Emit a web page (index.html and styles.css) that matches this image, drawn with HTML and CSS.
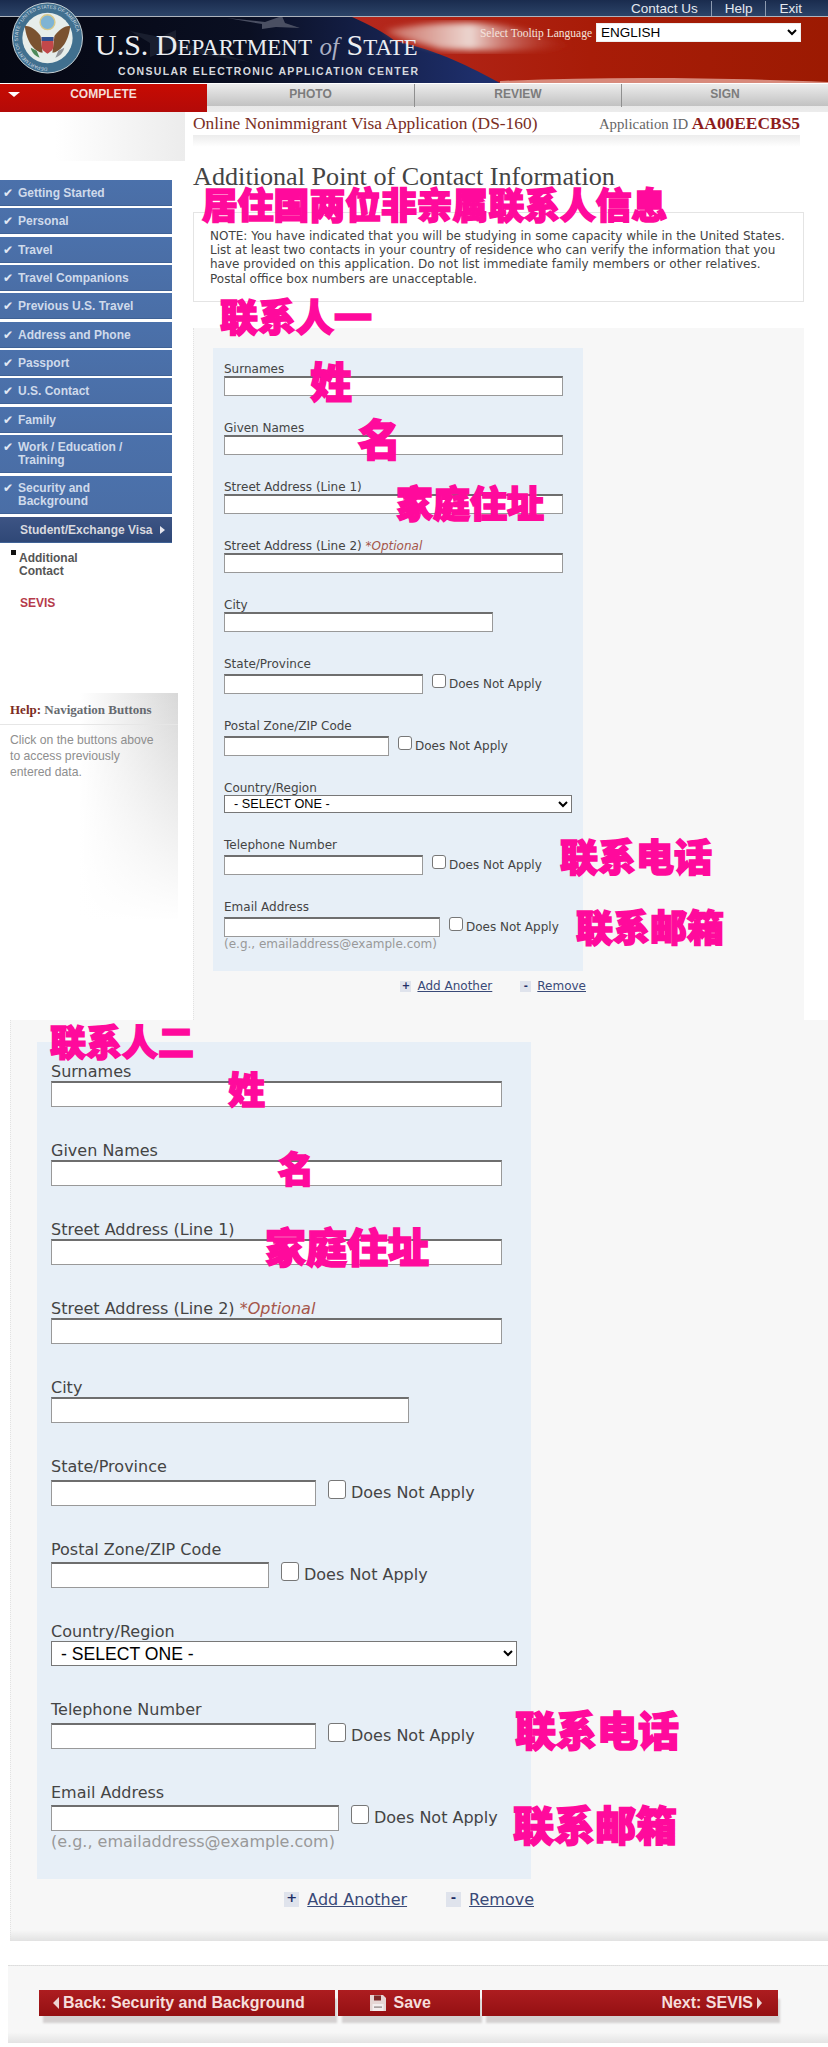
FILE: index.html
```html
<!DOCTYPE html>
<html lang="en">
	<head>
		<meta charset="UTF-8" />
		<meta name="viewport" content="width=device-width, initial-scale=1.0" />
		<title>Online Nonimmigrant Visa Application (DS-160)</title>
		<link rel="stylesheet" href="styles.css">
	</head>
	<body>
		<div class="topbar">
			<a href="#">Contact Us</a>
			<a href="#">Help</a>
			<a href="#">Exit</a>
		</div>

		<header class="banner">
			<svg class="flag" viewBox="0 0 828 66" preserveAspectRatio="none" aria-hidden="true">
				<defs>
					<linearGradient id="red" x1="0" y1="0" x2="1" y2="0">
						<stop offset="0" stop-color="#b5281e" />
						<stop offset="0.5" stop-color="#a81c08" />
						<stop offset="1" stop-color="#9c1a02" />
					</linearGradient>
					<linearGradient id="streak" x1="0" y1="0" x2="1" y2="0">
						<stop offset="0" stop-color="#c9685c" />
						<stop offset="0.45" stop-color="#ecd6d0" />
						<stop offset="1" stop-color="#b5281e" stop-opacity="0" />
					</linearGradient>
					<linearGradient id="navy" x1="0" y1="0" x2="1" y2="0">
						<stop offset="0" stop-color="#050712" />
						<stop offset="0.3" stop-color="#0a0f22" />
						<stop offset="0.58" stop-color="#1e2f6c" />
						<stop offset="1" stop-color="#1e2f6c" />
					</linearGradient>
					<filter id="soft"><feGaussianBlur stdDeviation="3" /></filter>
				</defs>
				<rect width="828" height="66" fill="url(#navy)" />
				<path d="M352 0 H828 V66 H500 C470 50 440 34 395 24 C385 16 370 8 352 0 Z" fill="url(#red)" />
				<path d="M385 14 C430 4 480 3 520 12 C545 18 560 24 575 30 C520 35 470 34 440 32 C420 26 400 22 385 14 Z" fill="url(#streak)" filter="url(#soft)" />
				<path d="M500 64 C600 60 700 60 828 65 V66 H500 Z" fill="#d88a7c" />
				<path d="M227 1 L265 5 L282 -1 L285 6 L300 11 L276 10 L262 12 L262 7 Z" fill="#4a4f62" />
				<path d="M130 14 L160 20 L176 13 L176 24 L250 45 L170 32 L150 40 L150 26 Z" fill="#191e2e" />
			</svg>
			<svg class="seal" viewBox="0 0 72 72" aria-hidden="true">
				<circle cx="36" cy="36" r="35.5" fill="#41708f" stroke="#c8d2d6" stroke-width="1" />
				<circle cx="36" cy="36" r="25.5" fill="#e6edea" />
				<path id="ring" d="M36 66 A30 30 0 1 1 36.1 66" fill="none" />
				<text class="seal-text"><textPath href="#ring">DEPARTMENT OF STATE * UNITED STATES OF AMERICA</textPath></text>
				<circle cx="36" cy="20" r="7.5" fill="#7fb4d4" stroke="#d8c98a" stroke-width="1.5" />
				<path d="M13 24 C18 23 25 28 29 34 L31 51 C24 50 15 42 13 24 Z" fill="#7a5230" />
				<path d="M59 24 C54 23 47 28 43 34 L41 51 C48 50 57 42 59 24 Z" fill="#7a5230" />
				<path d="M30 35 H42 V44 C42 49 38 50 36 52 C34 50 30 49 30 44 Z" fill="#c2484a" />
				<path d="M30 35 H42 V39 H30 Z" fill="#2e4f8f" />
				<path d="M19 46 C20 51 24 55 28 56 L25 49 Z" fill="#4d8a5a" />
				<path d="M53 46 C52 51 48 55 44 56 L47 49 Z" fill="#8f9397" />
			</svg>
			<div class="wordmark">
				<div class="dept">U.S. D<span class="caps">EPARTMENT</span> <em>of</em> S<span class="caps">TATE</span></div>
				<div class="center">CONSULAR ELECTRONIC APPLICATION CENTER</div>
			</div>
			<div class="tooltip-lang">
				<label for="lang">Select Tooltip Language</label>
				<select id="lang"><option>ENGLISH</option></select>
			</div>
		</header>

		<nav class="tabs">
			<div class="tab active"><span class="tab-arrow"></span>COMPLETE</div>
			<div class="tab">PHOTO</div>
			<div class="tab">REVIEW</div>
			<div class="tab">SIGN</div>
		</nav>

		<div class="content">
			<aside class="sidebar">
				<div class="side-fade"></div>
				<ul class="side-nav">
					<li><span class="check">✔</span>Getting Started</li>
					<li><span class="check">✔</span>Personal</li>
					<li><span class="check">✔</span>Travel</li>
					<li><span class="check">✔</span>Travel Companions</li>
					<li><span class="check">✔</span>Previous U.S. Travel</li>
					<li><span class="check">✔</span>Address and Phone</li>
					<li><span class="check">✔</span>Passport</li>
					<li><span class="check">✔</span>U.S. Contact</li>
					<li><span class="check">✔</span>Family</li>
					<li class="tall"><span class="check">✔</span>Work / Education /<br />Training</li>
					<li class="tall"><span class="check">✔</span>Security and<br />Background</li>
					<li class="current">Student/Exchange Visa<span class="side-arrow"></span></li>
				</ul>
				<div class="sub-item">Additional<br />Contact</div>
				<div class="sub-next">SEVIS</div>
				<div class="help">
					<h4><span>Help:</span> Navigation Buttons</h4>
					<p>Click on the buttons above to access previously entered data.</p>
				</div>
			</aside>

			<main class="main">
				<div class="app-row">
					<span class="app-title">Online Nonimmigrant Visa Application (DS-160)</span>
					<span class="app-id">Application ID <b>AA00EECBS5</b></span>
				</div>
				<div class="app-shadow"></div>
				<h1 class="page-title">Additional Point of Contact Information</h1>
				<div class="note">
					NOTE: You have indicated that you will be studying in some capacity while in the United States.
					List at least two contacts in your country of residence who can verify the information that you
					have provided on this application. Do not list immediate family members or other relatives.
					Postal office box numbers are unacceptable.
				</div>

				<section class="panel">
					<form class="contact">
						<div class="field"><label>Surnames</label><input class="w-full" type="text" /></div>
						<div class="field"><label>Given Names</label><input class="w-full" type="text" /></div>
						<div class="field"><label>Street Address (Line 1)</label><input class="w-full" type="text" /></div>
						<div class="field"><label>Street Address (Line 2) <i>*Optional</i></label><input class="w-full" type="text" /></div>
						<div class="field"><label>City</label><input class="w-city" type="text" /></div>
						<div class="field"><label>State/Province</label>
							<div class="row"><input class="w-state" type="text" /><input type="checkbox" /><span>Does Not Apply</span></div></div>
						<div class="field"><label>Postal Zone/ZIP Code</label>
							<div class="row"><input class="w-zip" type="text" /><input type="checkbox" /><span>Does Not Apply</span></div></div>
						<div class="field select-field"><label>Country/Region</label>
							<select><option>- SELECT ONE -</option></select></div>
						<div class="field"><label>Telephone Number</label>
							<div class="row"><input class="w-state" type="text" /><input type="checkbox" /><span>Does Not Apply</span></div></div>
						<div class="field last"><label>Email Address</label>
							<div class="row"><input class="w-email" type="text" /><input type="checkbox" /><span>Does Not Apply</span></div>
							<div class="hint">(e.g., emailaddress@example.com)</div></div>
					</form>
					<div class="add-row">
						<span class="mini-icon">+</span><a href="#">Add Another</a>
						<span class="mini-icon minus">-</span><a href="#">Remove</a>
					</div>
				</section>
			</main>
		</div>

		<section class="panel panel-wide">
			<form class="contact large">
				<div class="field"><label>Surnames</label><input class="w-full" type="text" /></div>
				<div class="field"><label>Given Names</label><input class="w-full" type="text" /></div>
				<div class="field"><label>Street Address (Line 1)</label><input class="w-full" type="text" /></div>
				<div class="field"><label>Street Address (Line 2) <i>*Optional</i></label><input class="w-full" type="text" /></div>
				<div class="field"><label>City</label><input class="w-city" type="text" /></div>
				<div class="field"><label>State/Province</label>
					<div class="row"><input class="w-state" type="text" /><input type="checkbox" /><span>Does Not Apply</span></div></div>
				<div class="field"><label>Postal Zone/ZIP Code</label>
					<div class="row"><input class="w-zip" type="text" /><input type="checkbox" /><span>Does Not Apply</span></div></div>
				<div class="field select-field"><label>Country/Region</label>
					<select><option>- SELECT ONE -</option></select></div>
				<div class="field"><label>Telephone Number</label>
					<div class="row"><input class="w-state" type="text" /><input type="checkbox" /><span>Does Not Apply</span></div></div>
				<div class="field last"><label>Email Address</label>
					<div class="row"><input class="w-email" type="text" /><input type="checkbox" /><span>Does Not Apply</span></div>
					<div class="hint">(e.g., emailaddress@example.com)</div></div>
			</form>
			<div class="add-row">
				<span class="mini-icon">+</span><a href="#">Add Another</a>
				<span class="mini-icon minus">-</span><a href="#">Remove</a>
			</div>
		</section>

		<section class="footer-panel">
			<div class="buttons">
				<div class="btn btn-back"><span class="arrow-left"></span>Back: Security and Background</div>
				<div class="btn btn-save">
					<svg class="floppy" viewBox="0 0 18 18" aria-hidden="true">
						<path d="M1 1 H14 L17 4 V17 H1 Z" fill="#e6d6d4" />
						<rect x="5" y="1.5" width="7" height="5" fill="#7d2a2a" />
						<rect x="3.5" y="10" width="11" height="7" fill="#f4eeee" />
						<rect x="5" y="12.5" width="8" height="1.2" fill="#8a8080" />
					</svg>
					Save
				</div>
				<div class="btn btn-next">Next: SEVIS<span class="arrow-right"></span></div>
			</div>
		</section>

		<!-- pink notes written over the screenshot -->
		<div class="mark m-title">居住国两位非亲属联系人信息</div>
		<div class="mark m-one">联系人一</div>
		<div class="mark m-sur1">姓</div>
		<div class="mark m-given1">名</div>
		<div class="mark m-addr1">家庭住址</div>
		<div class="mark m-tel1">联系电话</div>
		<div class="mark m-mail1">联系邮箱</div>
		<div class="mark m-two">联系人二</div>
		<div class="mark m-sur2">姓</div>
		<div class="mark m-given2">名</div>
		<div class="mark m-addr2">家庭住址</div>
		<div class="mark m-tel2">联系电话</div>
		<div class="mark m-mail2">联系邮箱</div>
	</body>
</html>
```

FILE: styles.css
```css
* {
	box-sizing: border-box;
}

body {
	position: relative;
	margin: 0;
	width: 828px;
	height: 2047px;
	overflow: hidden;
	background-color: #fff;
	font-family: "Liberation Sans", Arial, sans-serif;
}

/* top links */
.topbar {
	display: flex;
	justify-content: flex-end;
	align-items: center;
	height: 17px;
	padding-right: 26px;
	background: linear-gradient(#1a2c4e, #2c4468);
	border-bottom: 1px solid #aeb4bd;
}

.topbar a {
	padding: 0 13px;
	border-left: 1px solid #8d9bb0;
	color: #e4e9f0;
	font-size: 13.5px;
	line-height: 15px;
	text-decoration: none;
}

.topbar a:first-child {
	border-left: none;
}

.topbar a:last-child {
	padding-right: 0;
}

/* banner */
.banner {
	position: relative;
	height: 66px;
	background-color: #0a0f22;
}

.flag {
	position: absolute;
	left: 0;
	top: 0;
	width: 828px;
	height: 66px;
}

.seal {
	position: absolute;
	left: 12px;
	top: -15px;
	width: 71px;
	height: 72px;
}

.seal-text {
	font-family: "Liberation Sans", sans-serif;
	font-size: 5px;
	fill: #d5dfe6;
}

.wordmark {
	position: absolute;
	left: 95px;
	top: 11px;
	width: 323px;
	color: #eceef2;
}

.dept {
	font-family: "Liberation Serif", serif;
	font-size: 30px;
	line-height: 34px;
	white-space: nowrap;
}

.dept .caps {
	font-size: 23px;
}

.dept em {
	font-size: 25px;
	color: #aab0c4;
}

.center {
	padding-left: 23px;
	font-size: 10.5px;
	font-weight: 700;
	letter-spacing: 1.36px;
	line-height: 12px;
	white-space: nowrap;
	color: #d6d9df;
}

.tooltip-lang {
	position: absolute;
	right: 27px;
	top: 6px;
	display: flex;
	align-items: center;
	gap: 4px;
}

.tooltip-lang label {
	font-family: "Liberation Serif", serif;
	font-size: 11.5px;
	color: #f4e4de;
}

.tooltip-lang select {
	width: 205px;
	height: 19px;
	padding: 0;
	border: 1px solid #eee;
	border-radius: 0;
	background-color: #fff;
	font-family: "Liberation Sans", sans-serif;
	font-size: 13.5px;
}

/* step tabs */
.tabs {
	display: flex;
	height: 28px;
	margin-top: 1px;
	background: linear-gradient(#ececec 0, #c2c2c2 78%, #e8e8e8 79%, #ececec 100%);
}

.tab {
	width: 207px;
	height: 23px;
	border-left: 1px solid #8f8f8f;
	color: #7c7c7c;
	font-size: 12px;
	font-weight: 700;
	line-height: 20px;
	text-align: center;
}

.tab.active {
	position: relative;
	height: 28px;
	border-left: none;
	background: linear-gradient(#c70b02, #b30a08);
	color: #f6dcd8;
}

.tab-arrow {
	position: absolute;
	left: 8px;
	top: 8px;
	border-left: 6px solid transparent;
	border-right: 6px solid transparent;
	border-top: 5px solid #fff;
}

.tab:nth-child(2) {
	border-left: none;
}

/* page columns */
.content {
	display: flex;
	height: 908px;
}

.sidebar {
	flex: none;
	width: 193px;
}

.side-fade {
	width: 185px;
	height: 49px;
	margin-bottom: 19px;
	background: linear-gradient(to right, #fff 30%, #ececec 100%);
}

.side-nav {
	width: 172px;
	margin: 0;
	padding: 0;
	list-style: none;
}

.side-nav li {
	position: relative;
	height: 26px;
	margin-bottom: 2.33px;
	padding-left: 18px;
	background: linear-gradient(#4b71ab, #4a6ea6);
	border-bottom: 1px solid #3f6296;
	color: #cfdaeb;
	font-size: 12px;
	font-weight: 700;
	line-height: 26px;
}

.side-nav li.tall {
	height: 38px;
	margin-bottom: 3px;
	padding-top: 6px;
	line-height: 13px;
}

.side-nav li.current {
	padding-left: 20px;
	margin-bottom: 0;
	background: linear-gradient(#3d5484, #2f4877);
	color: #d9d9df;
}

.check {
	position: absolute;
	left: 3px;
	font-family: "DejaVu Sans", sans-serif;
	font-size: 12px;
	color: #e2e9f4;
}

.side-arrow {
	display: inline-block;
	margin-left: 7px;
	border-top: 4.5px solid transparent;
	border-bottom: 4.5px solid transparent;
	border-left: 5px solid #e6e6ee;
}

.sub-item {
	position: relative;
	margin: 9px 0 0 19px;
	color: #555;
	font-size: 12px;
	font-weight: 700;
	line-height: 13px;
}

.sub-item::before {
	content: "";
	position: absolute;
	left: -8px;
	top: -2px;
	width: 5px;
	height: 5px;
	background-color: #111;
}

.sub-next {
	margin: 18px 0 0 20px;
	color: #b53a4a;
	font-size: 12px;
	font-weight: 700;
	line-height: 14px;
}

.help {
	width: 178px;
	height: 240px;
	margin-top: 83px;
	background:
		linear-gradient(to bottom, rgba(255, 255, 255, 0) 0, #fff 95%),
		linear-gradient(to right, #fff 45%, #d8d8d8 100%);
}

.help h4 {
	margin: 0;
	padding: 8px 0 6px 10px;
	border-bottom: 1px solid #e6e6e6;
	color: #666a70;
	font-family: "Liberation Serif", serif;
	font-size: 13px;
	line-height: 17px;
}

.help h4 span {
	color: #7c2c22;
}

.help p {
	margin: 0;
	padding: 7px 20px 0 10px;
	color: #8e8e8e;
	font-size: 12.2px;
	line-height: 16px;
}

.main {
	flex: none;
	display: flex;
	flex-direction: column;
	width: 611px;
}

.app-row {
	display: flex;
	justify-content: space-between;
	align-items: center;
	height: 23px;
	padding-right: 4px;
	font-family: "Liberation Serif", serif;
}

.app-title {
	color: #7a2e24;
	font-size: 17.4px;
}

.app-id {
	color: #666;
	font-size: 14.8px;
}

.app-id b {
	color: #8d1c1c;
	font-size: 17.4px;
}

.app-shadow {
	height: 12px;
	margin-right: 4px;
	background: linear-gradient(#ececec, #fff);
}

.page-title {
	margin: 15px 0 20px;
	color: #444;
	font-family: "Liberation Serif", serif;
	font-size: 26.2px;
	font-weight: 400;
	line-height: 30px;
	white-space: nowrap;
}

.note {
	height: 90px;
	padding: 16px 8px 0 16px;
	border: 1px solid #e4e4e4;
	color: #444;
	font-family: "DejaVu Sans", Verdana, sans-serif;
	font-size: 12px;
	line-height: 14.2px;
}

/* form panels */
.panel {
	margin-top: 26px;
	flex: 1;
	padding: 20px 0 0 20px;
	border-left: 1px dotted #e2e2e2;
	background-color: #f7f7f7;
}

.panel-wide {
	width: 818px;
	height: 921px;
	margin: 0 0 0 10px;
	padding: 22px 0 0 26px;
	background: linear-gradient(#f7f7f7 0, #f7f7f7 98.8%, #e2e2e2 100%);
}

.contact {
	width: 370px;
	padding: 14px 0 20px 11px;
	background-color: #e7eff7;
	font-family: "DejaVu Sans", Verdana, sans-serif;
}

.panel:not(.panel-wide) .contact {
	margin-left: -1px;
}

.field {
	margin-bottom: 25px;
}

.field.last {
	margin-bottom: 0;
}

.field label {
	display: block;
	height: 14px;
	color: #444;
	font-size: 12px;
	line-height: 14px;
	white-space: nowrap;
}

.field label i {
	color: #a5564a;
}

.field input[type="text"] {
	display: block;
	flex: none;
	height: 20px;
	padding: 0;
	border: 1px solid #999;
	border-top: 2px solid #6e6e6e;
	background-color: #fff;
}

.w-full {
	width: 339px;
}

.w-city {
	width: 269px;
}

.w-state {
	width: 199px;
}

.w-zip {
	width: 165px;
}

.w-email {
	width: 216px;
}

.row {
	display: flex;
	align-items: flex-start;
	height: 20px;
	margin-top: 3px;
	font-size: 12px;
	color: #444;
}

.row input[type="checkbox"] {
	flex: none;
	width: 14px;
	height: 14px;
	margin: 0 3px 0 9px;
	appearance: none;
	border: 1px solid #777;
	border-radius: 3px;
	background-color: #fff;
}

.row span {
	margin-top: 3px;
	line-height: 14px;
	white-space: nowrap;
}

.select-field select {
	display: block;
	width: 348px;
	height: 18px;
	margin-bottom: 2px;
	padding: 0 0 0 5px;
	border: 1px solid #777;
	border-radius: 0;
	background-color: #fff;
	font-family: "Liberation Sans", sans-serif;
	font-size: 12.7px;
}

.hint {
	color: #999;
	font-size: 12px;
	line-height: 14px;
}

.add-row {
	display: flex;
	justify-content: flex-end;
	align-items: center;
	width: 372px;
	height: 14px;
	margin-top: 8px;
	font-family: "DejaVu Sans", Verdana, sans-serif;
	font-size: 12px;
}

.add-row a {
	color: #3a4a78;
}

.add-row a:first-of-type {
	margin-right: 28px;
}

.mini-icon {
	width: 11px;
	height: 11px;
	margin-right: 6px;
	background-color: #dfe3ec;
	color: #1f2f66;
	font-size: 10px;
	font-weight: 700;
	line-height: 9px;
	text-align: center;
}

/* larger copy of the form */
.contact.large {
	width: 494px;
	padding: 23px 0 28px 14px;
}

.large .field {
	margin-bottom: 37px;
}

.large .field.last {
	margin-bottom: 0;
}

.large .field label {
	height: 16px;
	font-size: 16px;
	line-height: 14px;
}

.large .field input[type="text"] {
	height: 26px;
}

.large .w-full {
	width: 451px;
}

.large .w-city {
	width: 358px;
}

.large .w-state {
	width: 265px;
}

.large .w-zip {
	width: 218px;
}

.large .w-email {
	width: 288px;
}

.large .row {
	height: 26px;
	margin-top: 3.5px;
	font-size: 16px;
}

.large .row input[type="checkbox"] {
	width: 18px;
	height: 19px;
	margin: 0 5px 0 12px;
}

.large .row span {
	margin-top: 4px;
	line-height: 18px;
}

.large .select-field select {
	width: 466px;
	height: 25px;
	margin-bottom: 1px;
	font-size: 17.6px;
}

.large .hint {
	margin-top: 2px;
	font-size: 16px;
	line-height: 18px;
}

.panel-wide .add-row {
	width: 497px;
	height: 18px;
	margin-top: 11px;
	font-size: 16px;
}

.panel-wide .add-row a:first-of-type {
	margin-right: 39px;
}

.panel-wide .mini-icon {
	width: 15px;
	height: 15px;
	margin-right: 8px;
	font-size: 13px;
	line-height: 12px;
}

/* bottom buttons */
.footer-panel {
	width: 820px;
	height: 78px;
	margin: 24px 0 0 8px;
	padding: 24px 0 0 31px;
	border-top: 1px dotted #ddd;
	background: linear-gradient(#f7f7f7 0, #f7f7f7 86%, #e3e3e3 100%);
}

.buttons {
	display: flex;
	gap: 2.5px;
}

.btn {
	display: flex;
	align-items: center;
	flex: none;
	height: 26px;
	background: linear-gradient(#ad1d20, #941012);
	box-shadow: 3px 8px 2px -1px #d4d0d0;
	color: #f6dedc;
	font-size: 16px;
	font-weight: 700;
	white-space: nowrap;
}

.btn-back {
	width: 296px;
	padding-left: 14px;
}

.btn-save {
	gap: 7px;
	width: 142px;
	padding-left: 31px;
}

.btn-next {
	justify-content: flex-end;
	width: 296px;
	padding-right: 16px;
}

.floppy {
	width: 18px;
	height: 18px;
}

.arrow-left {
	margin-right: 4px;
	border-top: 6px solid transparent;
	border-bottom: 6px solid transparent;
	border-right: 6px solid #ecd4d2;
}

.arrow-right {
	margin-left: 4px;
	border-top: 6px solid transparent;
	border-bottom: 6px solid transparent;
	border-left: 5px solid #ecd4d2;
}

/* pink handwritten labels */
.mark {
	position: absolute;
	color: #ff0a9c;
	font-family: "Noto Sans CJK SC", sans-serif;
	font-weight: 900;
	line-height: 1;
	white-space: nowrap;
	-webkit-text-stroke: 1.6px #ff0a9c;
}

.m-title {
	left: 202px;
	top: 186px;
	font-size: 35.8px;
}

.m-one {
	left: 220px;
	top: 296px;
	font-size: 38px;
}

.m-sur1 {
	left: 310px;
	top: 359px;
	font-size: 42px;
}

.m-given1 {
	left: 358px;
	top: 416px;
	font-size: 43px;
}

.m-addr1 {
	left: 396px;
	top: 484px;
	font-size: 37px;
}

.m-tel1 {
	left: 560px;
	top: 836px;
	font-size: 38px;
}

.m-mail1 {
	left: 576px;
	top: 908px;
	font-size: 37px;
}

.m-two {
	left: 50px;
	top: 1022px;
	font-size: 36px;
}

.m-sur2 {
	left: 228px;
	top: 1070px;
	font-size: 37px;
}

.m-given2 {
	left: 278px;
	top: 1149px;
	font-size: 36px;
}

.m-addr2 {
	left: 265px;
	top: 1225px;
	font-size: 41px;
}

.m-tel2 {
	left: 515px;
	top: 1708px;
	font-size: 41px;
}

.m-mail2 {
	left: 513px;
	top: 1803px;
	font-size: 41px;
}
```
